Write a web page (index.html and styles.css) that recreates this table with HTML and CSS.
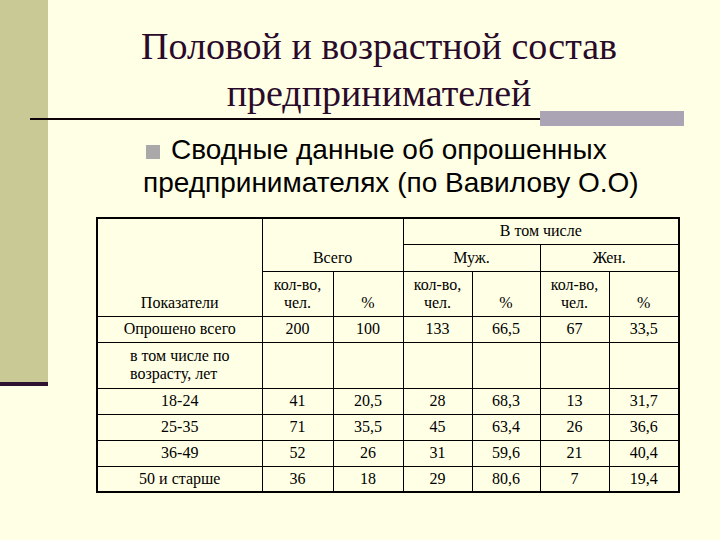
FILE: index.html
```html
<!DOCTYPE html>
<html lang="ru">
<head>
<meta charset="utf-8">
<title>Половой и возрастной состав предпринимателей</title>
<link rel="stylesheet" href="styles.css">
</head>
<body>
<div class="slide">
  <div class="sidebar"></div>
  <div class="main">
    <h1 class="title">Половой и возрастной состав<br>предпринимателей</h1>
    <div class="rule"><span class="rule-line"></span><span class="rule-bar"></span></div>
    <p class="bullet"><span class="bullet-mark"></span>Сводные данные об опрошенных предпринимателях (по Вавилову О.О)</p>
    <table class="data">
      <colgroup>
        <col class="c-name"><col class="c-n1"><col class="c-p1"><col class="c-n2"><col class="c-p2"><col class="c-n3"><col class="c-p3">
      </colgroup>
      <tr class="r-h1">
        <td rowspan="3" class="bottom">Показатели</td>
        <td rowspan="2" colspan="2" class="bottom">Всего</td>
        <td colspan="4">В том числе</td>
      </tr>
      <tr class="r-h2">
        <td colspan="2">Муж.</td>
        <td colspan="2">Жен.</td>
      </tr>
      <tr class="r-h3">
        <td class="bottom">кол-во,<br>чел.</td><td class="bottom">%</td>
        <td class="bottom">кол-во,<br>чел.</td><td class="bottom">%</td>
        <td class="bottom">кол-во,<br>чел.</td><td class="bottom">%</td>
      </tr>
      <tr class="r-row">
        <td>Опрошено всего</td><td>200</td><td>100</td><td>133</td><td>66,5</td><td>67</td><td>33,5</td>
      </tr>
      <tr class="r-tall">
        <td class="left">в том числе по<br>возрасту, лет</td><td></td><td></td><td></td><td></td><td></td><td></td>
      </tr>
      <tr class="r-row2">
        <td>18-24</td><td>41</td><td>20,5</td><td>28</td><td>68,3</td><td>13</td><td>31,7</td>
      </tr>
      <tr class="r-row">
        <td>25-35</td><td>71</td><td>35,5</td><td>45</td><td>63,4</td><td>26</td><td>36,6</td>
      </tr>
      <tr class="r-row2">
        <td>36-49</td><td>52</td><td>26</td><td>31</td><td>59,6</td><td>21</td><td>40,4</td>
      </tr>
      <tr class="r-row">
        <td>50 и старше</td><td>36</td><td>18</td><td>29</td><td>80,6</td><td>7</td><td>19,4</td>
      </tr>
    </table>
  </div>
</div>
</body>
</html>
```

FILE: styles.css
```css
html, body {
  margin: 0;
  padding: 0;
}
body {
  background: #ffffe5;
  width: 720px;
  height: 540px;
  overflow: hidden;
}
.slide {
  display: flex;
  align-items: flex-start;
}
.sidebar {
  flex: none;
  width: 48px;
  height: 382px;
  background: #c9c996;
  border-bottom: 4px solid #2e1232;
}
.main {
  flex: 1;
  min-width: 0;
}
.title {
  margin: 0 10px 0 0;
  padding-top: 23px;
  font-family: "Liberation Serif", "Times New Roman", serif;
  font-weight: normal;
  font-size: 38px;
  line-height: 47px;
  color: #2a0a2a;
  text-align: center;
}
.rule {
  display: flex;
  align-items: center;
  margin-left: -18px;
  margin-top: -6px;
  height: 15px;
}
.rule-line {
  width: 510px;
  height: 2px;
  background: #0e0308;
}
.rule-bar {
  width: 144px;
  height: 15px;
  background: #aaa4b4;
}
.bullet {
  margin: 7px 0 0 95px;
  font-family: "Liberation Sans", Arial, sans-serif;
  font-size: 28px;
  line-height: 33px;
  color: #000;
}
.bullet-mark {
  display: inline-block;
  width: 14px;
  height: 14px;
  margin: 0 11px 0 3px;
  background: #a9a9a9;
}
.data {
  margin: 18px 0 0 48px;
  border-collapse: collapse;
  table-layout: fixed;
  width: 583px;
  font-family: "Liberation Serif", "Times New Roman", serif;
  font-size: 16px;
  line-height: 18px;
  color: #000;
  border: 2px solid #000;
}
.data td {
  border: 1px solid #000;
  padding: 0 2px;
  text-align: center;
  vertical-align: middle;
}
.data td.bottom {
  vertical-align: bottom;
  padding-bottom: 4px;
}
.data td.left {
  text-align: left;
  padding-left: 32px;
}
.c-name { width: 165px; }
.c-n1 { width: 71px; }
.c-p1 { width: 70px; }
.c-n2 { width: 69px; }
.c-p2 { width: 68px; }
.c-n3 { width: 69px; }
.c-p3 { width: 70px; }
.r-h1 { height: 26px; }
.r-h2 { height: 27px; }
.r-h3 { height: 45px; }
.r-row { height: 26px; }
.r-row2 { height: 26px; }
.r-tall { height: 46px; }
```
